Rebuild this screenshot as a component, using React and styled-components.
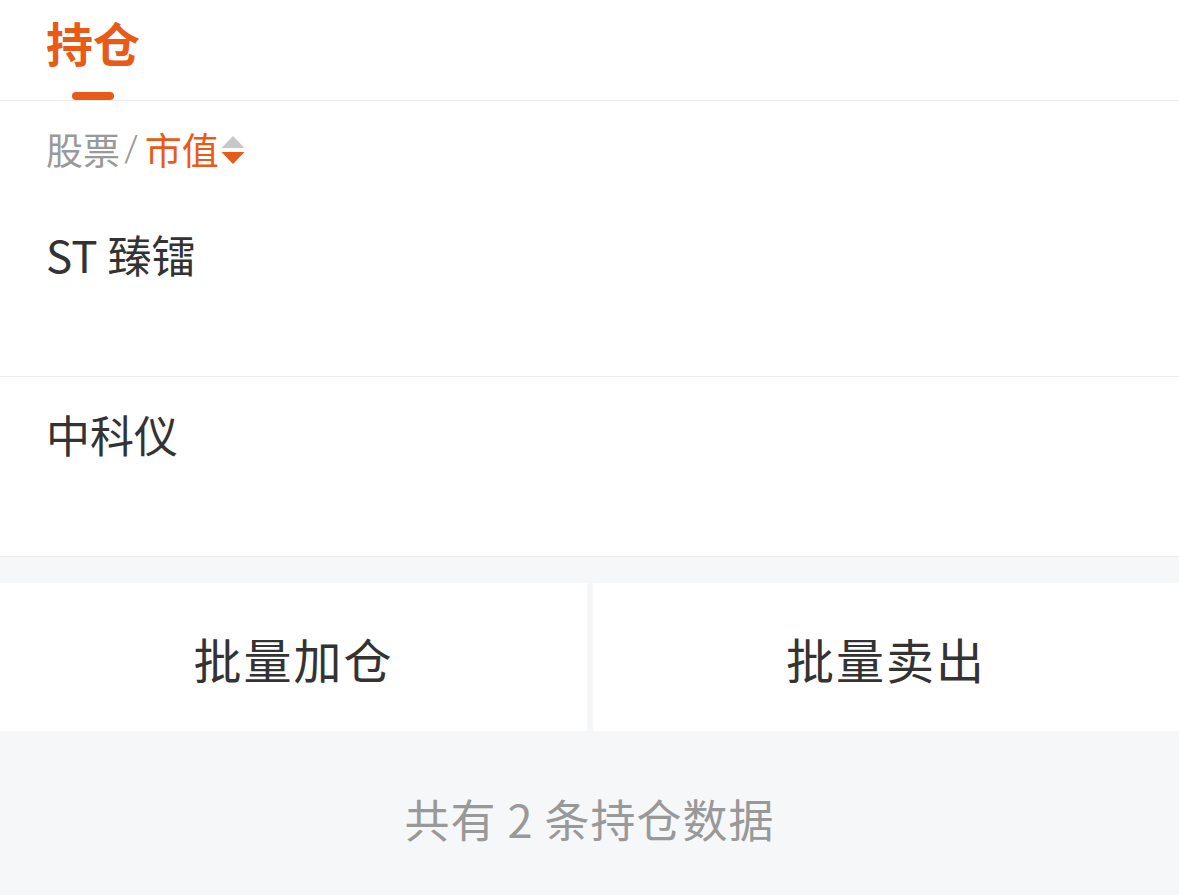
import styled, { createGlobalStyle } from 'styled-components'

const GlobalStyle = createGlobalStyle`
  html, body {
    margin: 0;
    padding: 0;
    background: #f6f7f9;
  }
  body {
    font-family: "Noto Sans CJK SC", "Noto Sans", sans-serif;
  }
`

const ORANGE = '#e85a16'

const holdings = [
  { id: 1, name: 'ST 臻镭' },
  { id: 2, name: '中科仪' },
]

function App() {
  return (
    <>
      <GlobalStyle />
      <Page>
        <TabBar>
          <Tab active>持仓</Tab>
        </TabBar>
        <ListHeader>
          <HeaderLabel>股票</HeaderLabel>
          <Slash>/</Slash>
          <HeaderLabel active>市值</HeaderLabel>
          <SortIcon viewBox="0 0 24 30">
            <path d="M12 1 L23.5 13 L0.5 13 Z" fill="#c8c8c8" />
            <path d="M0.5 17 L23.5 17 L12 29 Z" fill={ORANGE} />
          </SortIcon>
        </ListHeader>
        {holdings.map((h) => (
          <StockRow key={h.id}>
            <StockName>{h.name}</StockName>
          </StockRow>
        ))}
        <Actions>
          <ActionButton>批量加仓</ActionButton>
          <ActionButton>批量卖出</ActionButton>
        </Actions>
        <Summary>共有 2 条持仓数据</Summary>
      </Page>
    </>
  )
}

export default App

const Page = styled.div`
  width: 1179px;
  min-height: 895px;
  background: #f6f7f9;
  display: flex;
  flex-direction: column;
`

const TabBar = styled.div`
  height: 101px;
  background: #fff;
  border-bottom: 1px solid #ebebeb;
  display: flex;
  align-items: stretch;
  padding-left: 46px;
  box-sizing: border-box;
`

const Tab = styled.div`
  position: relative;
  font-size: 47px;
  font-weight: 700;
  line-height: 1;
  color: ${(p) => (p.active ? ORANGE : '#333')};
  padding-top: 18px;

  &::after {
    content: '';
    display: ${(p) => (p.active ? 'block' : 'none')};
    position: absolute;
    left: 26px;
    bottom: 0;
    width: 42px;
    height: 8px;
    border-radius: 4px;
    background: ${ORANGE};
  }
`

const ListHeader = styled.div`
  background: #fff;
  height: 96px;
  display: flex;
  align-items: flex-start;
  padding: 25px 0 0 46px;
  box-sizing: border-box;
`

const HeaderLabel = styled.span`
  font-size: 37px;
  line-height: 46px;
  color: ${(p) => (p.active ? ORANGE : '#999')};
`

const Slash = styled.span`
  font-size: 37px;
  line-height: 46px;
  color: #999;
  margin: 0 6px 0 4px;
  font-family: "Roboto", sans-serif;
  font-weight: 300;
`

const SortIcon = styled.svg`
  width: 24px;
  height: 30px;
  margin-top: 9px;
  margin-left: 2px;
  flex-shrink: 0;
`

const StockRow = styled.div`
  background: #fff;
  height: 180px;
  border-bottom: 1px solid #ececec;
  box-sizing: border-box;
  padding: 29px 0 0 46px;
  &:first-of-type {
    height: 181px;
  }
`

const StockName = styled.div`
  font-size: 44px;
  line-height: 56px;
  color: #333;
`

const Actions = styled.div`
  margin-top: 26px;
  display: grid;
  grid-template-columns: 587px 1fr;
  gap: 6px;
`

const ActionButton = styled.div`
  height: 148px;
  background: #fff;
  display: flex;
  align-items: center;
  justify-content: center;
  font-size: 48px;
  color: #333;
  letter-spacing: 2px;
  padding-top: 2px;
  box-sizing: border-box;
`

const Summary = styled.div`
  text-align: center;
  font-size: 45px;
  color: #999;
  margin-top: 58px;
  line-height: 60px;
  letter-spacing: 1px;
`
